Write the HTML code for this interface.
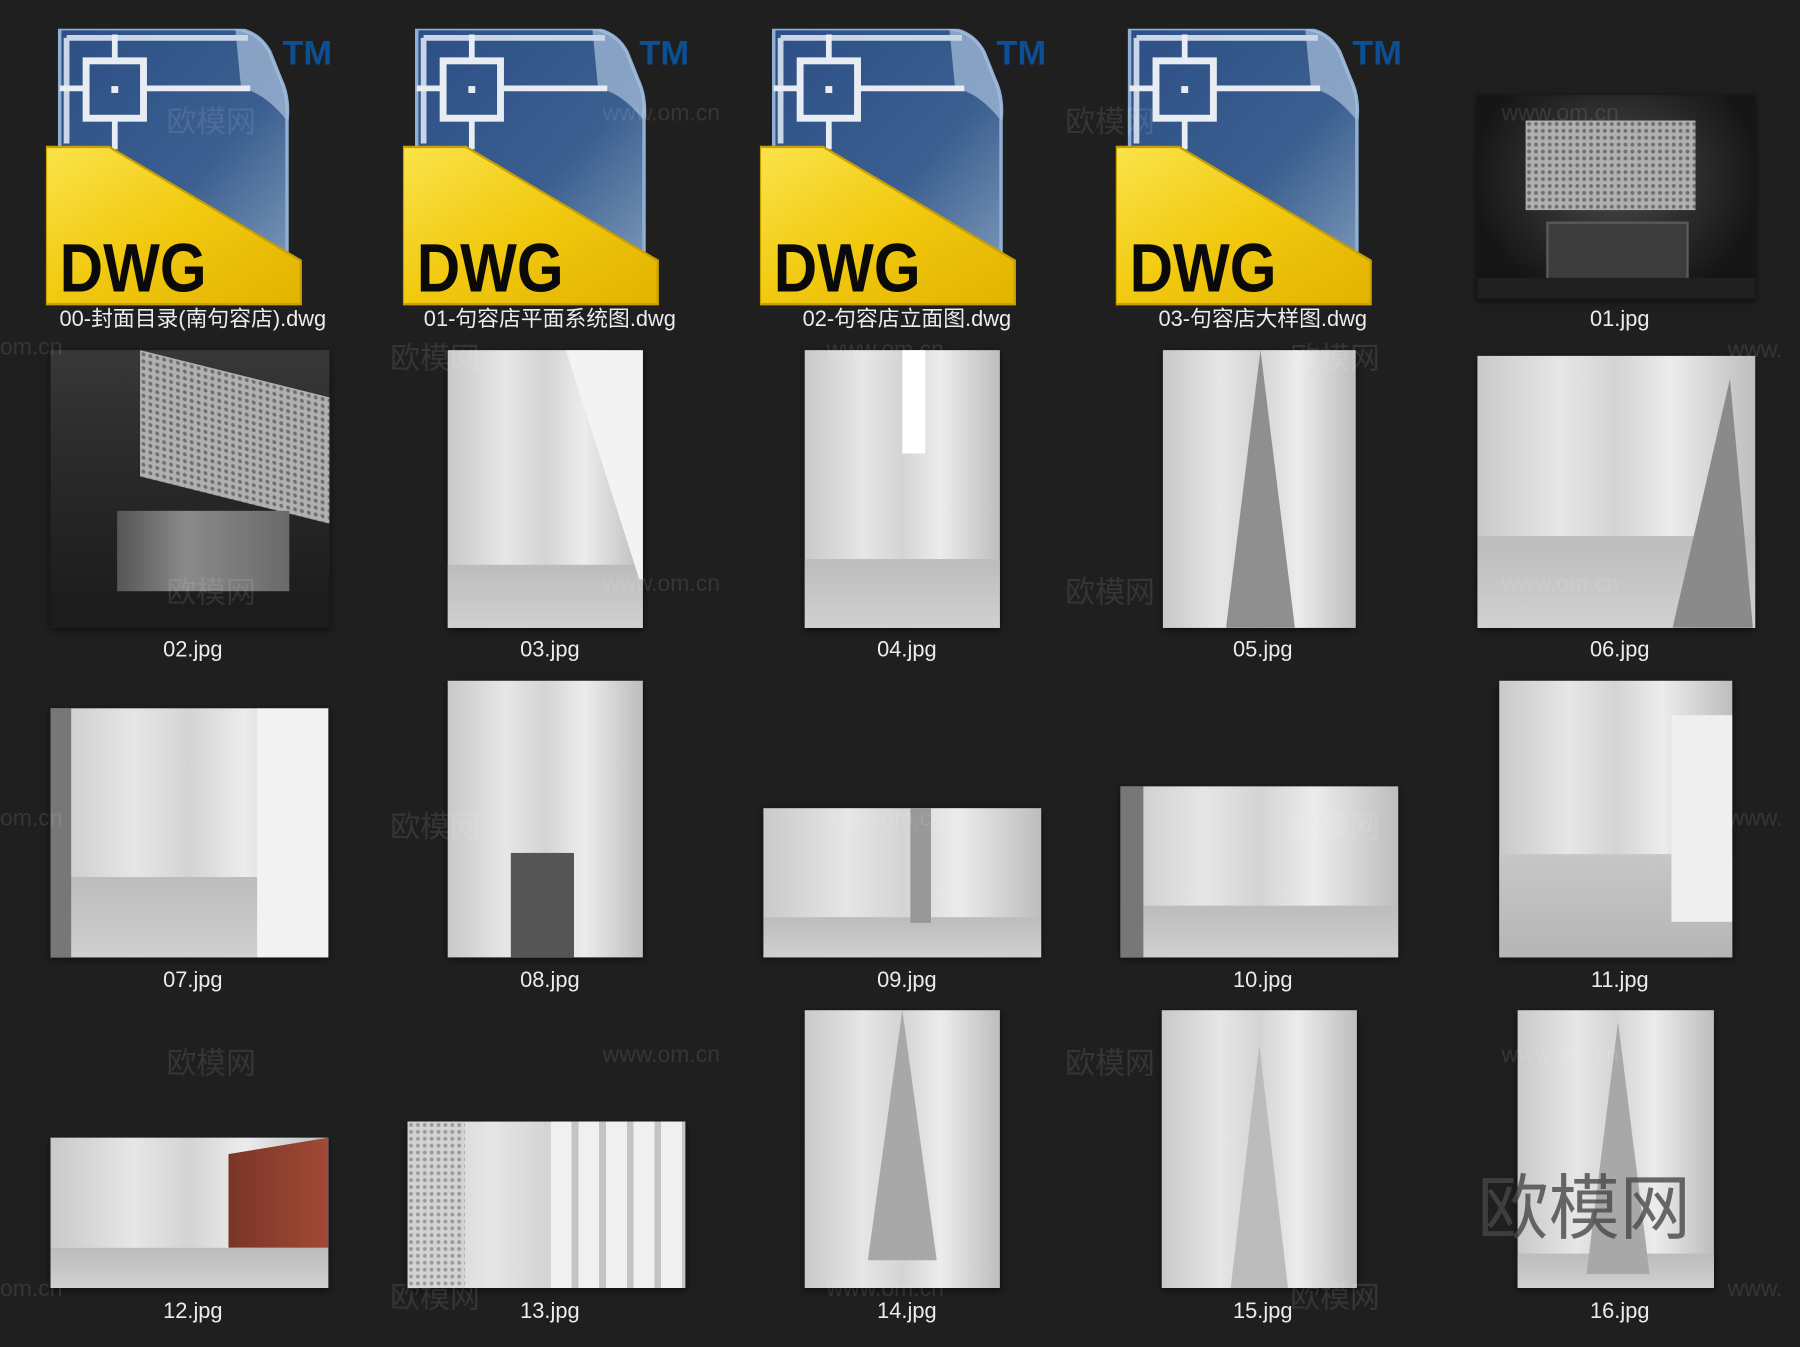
<!DOCTYPE html>
<html><head><meta charset="utf-8"><style>
html,body{margin:0;padding:0;background:#1f1f1f;overflow:hidden;width:1800px;height:1347px}
#c{position:absolute;left:0;top:0;width:1568px;height:1173px;transform:scale(1.14796);transform-origin:0 0;font-family:"Liberation Sans","Noto Sans CJK SC",sans-serif}
.i{position:absolute;box-shadow:0 2px 6px rgba(0,0,0,.6);overflow:hidden}
.l{position:absolute;width:300px;text-align:center;color:#ececec;font-size:19px;line-height:22px}
.w{position:absolute;color:rgba(255,255,255,.1);font-size:26px;white-space:nowrap}
.lt{background:linear-gradient(90deg,#c9c9c9,#e6e6e6 30%,#d4d4d4 50%,#ececec 70%,#bdbdbd)}
.fl{position:absolute;left:0;right:0;bottom:0;background:linear-gradient(#bcbcbc,#d0d0d0)}
.dots{background:radial-gradient(circle,#6e6e6e 1.4px,transparent 2px) 0 0/6px 6px,#b0b0b0}
svg.d{position:absolute}
</style></head><body><div id="c">

<svg width="0" height="0" style="position:absolute"><defs>
<linearGradient id="bl" x1="0" y1="0" x2="1" y2="1"><stop offset="0" stop-color="#2d4f86"/><stop offset=".6" stop-color="#3b5f90"/><stop offset="1" stop-color="#7d99b8"/></linearGradient>
<linearGradient id="ye" x1="0" y1="0" x2="1" y2="1"><stop offset="0" stop-color="#fbe34a"/><stop offset=".5" stop-color="#f1c90f"/><stop offset="1" stop-color="#e2b200"/></linearGradient>
<g id="dwg">
<path d="M12 0 H165 Q185 2 195 20 L205 45 Q212 60 210 80 V215 H12 Z" fill="url(#bl)" stroke="#8fb0d4" stroke-width="3"/>
<path d="M165 0 Q185 2 195 20 L205 45 Q212 60 210 80 Q190 55 170 52 Z" fill="#a9c1dc" opacity=".7"/>
<path d="M18 8 H176 M18 8 V100" stroke="#c8d6e8" stroke-width="5" fill="none"/>
<rect x="35" y="28" width="50" height="50" fill="none" stroke="#e8edf3" stroke-width="6"/>
<rect x="57" y="50" width="6" height="6" fill="#e8edf3"/>
<path d="M60 5 V28 M60 78 V105 M12 52 H35 M85 52 H178" stroke="#e8edf3" stroke-width="5"/>
<path d="M0 103 H55 L222 202 V240 H0 Z" fill="url(#ye)" stroke="#caa000" stroke-width="2"/>
<text x="12" y="229" font-family="Liberation Sans" font-weight="bold" font-size="60" fill="#0a0a0a" textLength="128" lengthAdjust="spacingAndGlyphs">DWG</text>
<text x="206" y="31" font-family="Liberation Sans" font-weight="bold" font-size="30" fill="#0c4f94">TM</text>
</g></defs></svg>
<svg class="d" style="left:40px;top:25px" width="262" height="242"><use href="#dwg"/></svg>
<svg class="d" style="left:351px;top:25px" width="262" height="242"><use href="#dwg"/></svg>
<svg class="d" style="left:662px;top:25px" width="262" height="242"><use href="#dwg"/></svg>
<svg class="d" style="left:972px;top:25px" width="262" height="242"><use href="#dwg"/></svg>

<div class="i" style="left:1287px;top:83px;width:242px;height:177px;background:radial-gradient(ellipse at 50% 40%,#4a4a4a,#151515 75%)">
<div class="dots" style="position:absolute;left:42px;top:22px;width:148px;height:78px"></div>
<div style="position:absolute;left:60px;top:110px;width:120px;height:48px;background:#3c3c3c;border:2px solid #5a5a5a"></div>
<div style="position:absolute;left:0;right:0;bottom:0;height:18px;background:#202020"></div></div>

<div class="i" style="left:44px;top:305px;width:243px;height:242px;background:linear-gradient(#383838,#2a2a2a 40%,#1a1a1a)">
<div class="dots" style="position:absolute;left:78px;top:0;width:165px;height:110px;transform:skewY(14deg);transform-origin:0 0"></div>
<div style="position:absolute;left:58px;top:140px;width:150px;height:70px;background:linear-gradient(90deg,#555,#8a8a8a 40%,#6a6a6a)"></div>
<div style="position:absolute;left:0;right:0;bottom:0;height:28px;background:#1c1c1c"></div></div>
<div class="i lt" style="left:390px;top:305px;width:170px;height:242px"><div class="fl" style="height:55px"></div><div style="position:absolute;left:95px;top:0;width:80px;height:200px;background:#f3f3f3;clip-path:polygon(10% 0,100% 0,100% 100%,90% 100%)"></div></div>
<div class="i lt" style="left:701px;top:305px;width:170px;height:242px"><div class="fl" style="height:60px"></div><div style="position:absolute;left:85px;top:0;width:20px;height:90px;background:#fff"></div></div>
<div class="i lt" style="left:1013px;top:305px;width:168px;height:242px"><div style="position:absolute;left:55px;top:0;width:60px;height:242px;background:#8f8f8f;clip-path:polygon(50% 0,100% 100%,0 100%)"></div></div>
<div class="i lt" style="left:1287px;top:310px;width:242px;height:237px"><div class="fl" style="height:80px"></div><div style="position:absolute;left:140px;top:20px;width:100px;height:217px;background:#8a8a8a;clip-path:polygon(80% 0,100% 100%,30% 100%)"></div></div>

<div class="i lt" style="left:44px;top:617px;width:242px;height:217px"><div class="fl" style="height:70px"></div><div style="position:absolute;left:180px;top:0;width:62px;height:217px;background:#f2f2f2"></div><div style="position:absolute;left:0;top:0;width:18px;height:217px;background:#777"></div></div>
<div class="i lt" style="left:390px;top:593px;width:170px;height:241px"><div style="position:absolute;left:55px;top:150px;width:55px;height:91px;background:#555"></div></div>
<div class="i lt" style="left:665px;top:704px;width:242px;height:130px"><div class="fl" style="height:35px"></div><div style="position:absolute;left:128px;top:0;width:18px;height:100px;background:#999"></div></div>
<div class="i lt" style="left:976px;top:685px;width:242px;height:149px"><div class="fl" style="height:45px"></div><div style="position:absolute;left:0;top:0;width:20px;height:149px;background:#777"></div></div>
<div class="i lt" style="left:1306px;top:593px;width:203px;height:241px"><div class="fl" style="height:90px;background:linear-gradient(#c7c7c7,#b5b5b5)"></div><div style="position:absolute;left:150px;top:30px;width:53px;height:180px;background:#efefef"></div></div>

<div class="i lt" style="left:44px;top:991px;width:242px;height:131px"><div class="fl" style="height:35px"></div><div style="position:absolute;left:155px;top:0;width:87px;height:96px;background:linear-gradient(90deg,#7a3527,#a24a35);clip-path:polygon(0 15%,100% 0,100% 100%,0 100%)"></div></div>
<div class="i lt" style="left:355px;top:977px;width:242px;height:145px"><div style="position:absolute;left:0;top:0;width:50px;height:145px;background:radial-gradient(circle,#999 1.4px,transparent 2px) 0 0/6px 6px,#d3d3d3"></div><div style="position:absolute;left:125px;top:0;width:117px;height:145px;background:repeating-linear-gradient(90deg,#f0f0f0 0 18px,#c4c4c4 18px 24px)"></div></div>
<div class="i lt" style="left:701px;top:880px;width:170px;height:242px"><div style="position:absolute;left:55px;top:0;width:60px;height:242px;background:#a8a8a8;clip-path:polygon(50% 0,100% 90%,0 90%)"></div></div>
<div class="i lt" style="left:1012px;top:880px;width:170px;height:242px"><div style="position:absolute;left:60px;top:30px;width:50px;height:212px;background:#bcbcbc;clip-path:polygon(50% 0,100% 100%,0 100%)"></div></div>
<div class="i lt" style="left:1322px;top:880px;width:171px;height:242px"><div class="fl" style="height:30px"></div><div style="position:absolute;left:60px;top:10px;width:55px;height:220px;background:#a8a8a8;clip-path:polygon(50% 0,100% 100%,0 100%)"></div></div>

<div class="w" style="left:145px;top:86px">欧模网</div>
<div class="w" style="left:525px;top:88px;font-size:20px">www.om.cn</div>
<div class="w" style="left:928px;top:86px">欧模网</div>
<div class="w" style="left:1308px;top:88px;font-size:20px">www.om.cn</div>
<div class="w" style="left:0;top:292px;font-size:20px">om.cn</div>
<div class="w" style="left:340px;top:292px">欧模网</div>
<div class="w" style="left:720px;top:294px;font-size:20px">www.om.cn</div>
<div class="w" style="left:1124px;top:292px">欧模网</div>
<div class="w" style="left:1505px;top:294px;font-size:20px">www.</div>
<div class="w" style="left:145px;top:496px">欧模网</div>
<div class="w" style="left:525px;top:498px;font-size:20px">www.om.cn</div>
<div class="w" style="left:928px;top:496px">欧模网</div>
<div class="w" style="left:1308px;top:498px;font-size:20px">www.om.cn</div>
<div class="w" style="left:0;top:702px;font-size:20px">om.cn</div>
<div class="w" style="left:340px;top:700px">欧模网</div>
<div class="w" style="left:720px;top:702px;font-size:20px">www.om.cn</div>
<div class="w" style="left:1124px;top:700px">欧模网</div>
<div class="w" style="left:1505px;top:702px;font-size:20px">www.</div>
<div class="w" style="left:145px;top:906px">欧模网</div>
<div class="w" style="left:525px;top:908px;font-size:20px">www.om.cn</div>
<div class="w" style="left:928px;top:906px">欧模网</div>
<div class="w" style="left:1308px;top:908px;font-size:20px">www.om.cn</div>
<div class="w" style="left:0;top:1112px;font-size:20px">om.cn</div>
<div class="w" style="left:340px;top:1110px">欧模网</div>
<div class="w" style="left:720px;top:1112px;font-size:20px">www.om.cn</div>
<div class="w" style="left:1124px;top:1110px">欧模网</div>
<div class="w" style="left:1505px;top:1112px;font-size:20px">www.</div>
<div class="w" style="left:1287px;top:1002px;font-size:62px;color:rgba(70,70,70,.8)">欧模网</div>

<div class="l" style="left:18px;top:268px">00-封面目录(南句容店).dwg</div>
<div class="l" style="left:329px;top:268px">01-句容店平面系统图.dwg</div>
<div class="l" style="left:640px;top:268px">02-句容店立面图.dwg</div>
<div class="l" style="left:950px;top:268px">03-句容店大样图.dwg</div>
<div class="l" style="left:1261px;top:268px">01.jpg</div>
<div class="l" style="left:18px;top:556px">02.jpg</div>
<div class="l" style="left:329px;top:556px">03.jpg</div>
<div class="l" style="left:640px;top:556px">04.jpg</div>
<div class="l" style="left:950px;top:556px">05.jpg</div>
<div class="l" style="left:1261px;top:556px">06.jpg</div>
<div class="l" style="left:18px;top:844px">07.jpg</div>
<div class="l" style="left:329px;top:844px">08.jpg</div>
<div class="l" style="left:640px;top:844px">09.jpg</div>
<div class="l" style="left:950px;top:844px">10.jpg</div>
<div class="l" style="left:1261px;top:844px">11.jpg</div>
<div class="l" style="left:18px;top:1132px">12.jpg</div>
<div class="l" style="left:329px;top:1132px">13.jpg</div>
<div class="l" style="left:640px;top:1132px">14.jpg</div>
<div class="l" style="left:950px;top:1132px">15.jpg</div>
<div class="l" style="left:1261px;top:1132px">16.jpg</div>
</div></body></html>
